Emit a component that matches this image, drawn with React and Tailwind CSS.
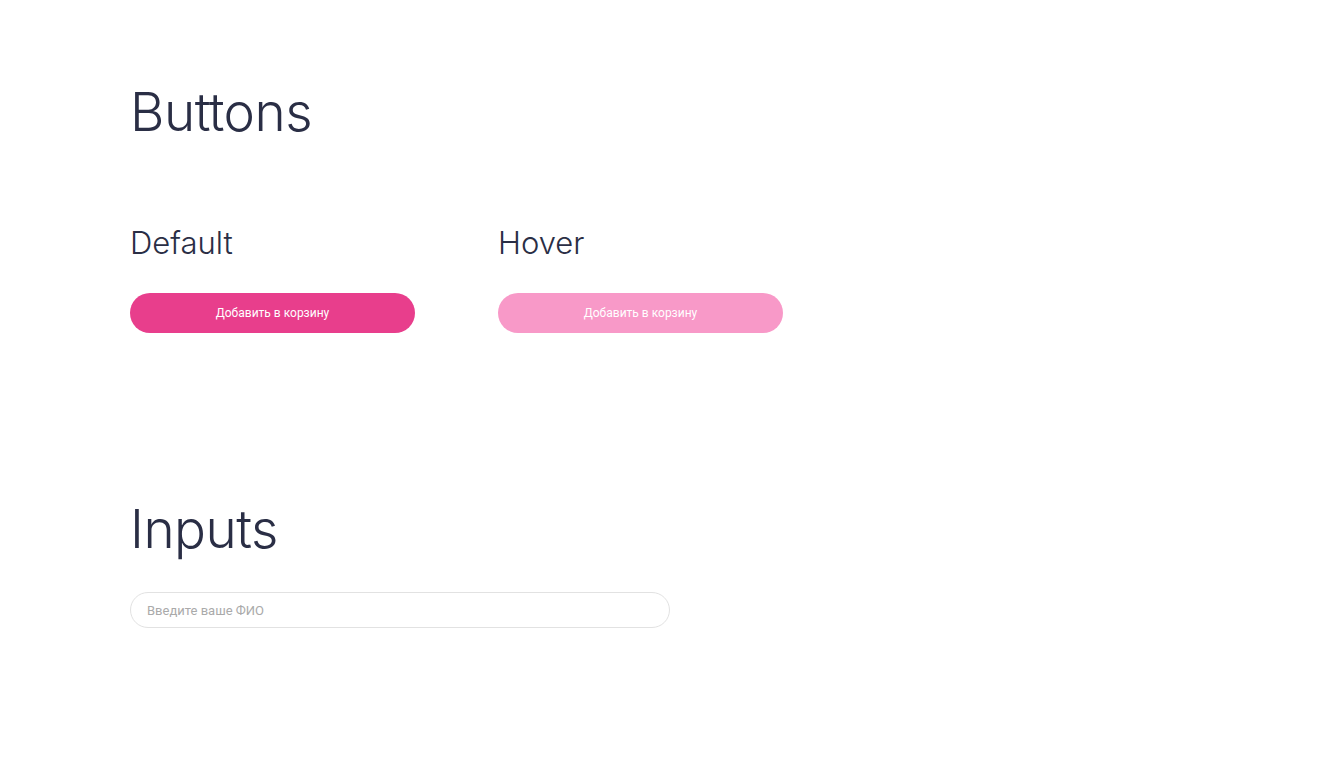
export default function App() {
  return (
    <div className="min-h-[776px] w-full bg-white pl-[130px] pt-[86px] font-['Roboto',sans-serif]">
      <h1 className="font-['Inter',sans-serif] text-[53px] leading-none font-light text-[#2a2e45] tracking-[-0.5px]">
        Buttons
      </h1>
      <div className="mt-[88px] flex gap-[83px]">
        <div className="w-[285px]">
          <h2 className="font-['Inter',sans-serif] text-[31px] leading-none font-light text-[#2a2e45]">
            Default
          </h2>
          <button className="mt-[35px] flex h-[40px] w-[285px] items-center justify-center rounded-full bg-[#e83e8c] text-[12px] text-white">
            Добавить в корзину
          </button>
        </div>
        <div className="w-[285px]">
          <h2 className="font-['Inter',sans-serif] text-[31px] leading-none font-light text-[#2a2e45]">
            Hover
          </h2>
          <button className="mt-[35px] flex h-[40px] w-[285px] items-center justify-center rounded-full bg-[#f899c8] text-[12px] text-white">
            Добавить в корзину
          </button>
        </div>
      </div>
      <h1 className="mt-[170px] font-['Inter',sans-serif] text-[53px] leading-none font-light text-[#2a2e45] tracking-[-0.5px]">
        Inputs
      </h1>
      <div className="mt-[36px] w-[540px]">
        <input
          placeholder="Введите ваше ФИО"
          className="h-[36px] w-full rounded-full border border-[#e2e2e2] bg-white px-[16px] text-[13px] text-[#333] placeholder:text-[#aaaaaa] outline-none"
        />
      </div>
    </div>
  );
}
